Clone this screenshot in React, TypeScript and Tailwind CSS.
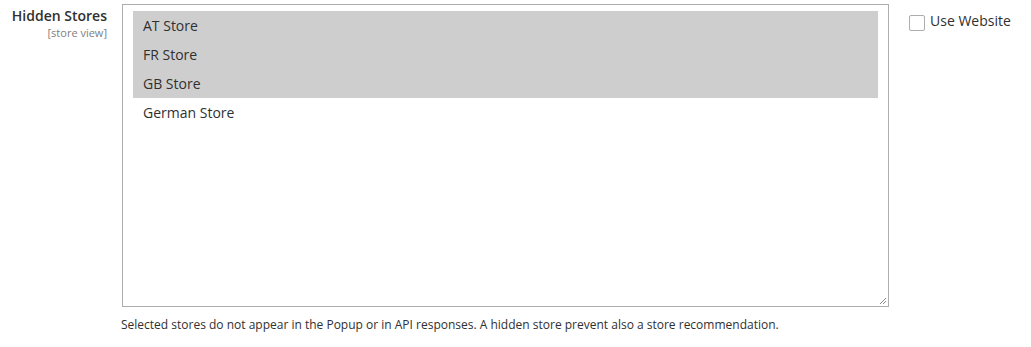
import React from 'react'

const stores = [
  { name: 'AT Store', selected: true },
  { name: 'FR Store', selected: true },
  { name: 'GB Store', selected: true },
  { name: 'German Store', selected: false },
]

export default function App() {
  return (
    <div className="w-[1031px] h-[347px] bg-white text-[#303030] font-['Open_Sans',sans-serif]">
      <div className="flex pt-[4px]">
        <div className="w-[107px] shrink-0 text-right pt-[2px]">
          <div className="text-[14px] leading-[19px] font-semibold">Hidden Stores</div>
          <div className="text-[11px] leading-[14px] text-[#808080] mt-[1px]">[store view]</div>
        </div>

        <div className="ml-[15px] w-[767px] shrink-0">
          <div className="relative h-[303px] border border-[#adadad] bg-white px-[10px] py-[6px]">
            {stores.map((s) => (
              <div
                key={s.name}
                className={`h-[29px] flex items-center pl-[10px] text-[14px] ${s.selected ? 'bg-[#cecece]' : ''}`}
              >
                {s.name}
              </div>
            ))}
            <svg className="absolute right-[1px] bottom-[1px]" width="9" height="9" viewBox="0 0 9 9">
              <path d="M8 2 L2 8 M8 5 L5 8" stroke="#8a8a8a" strokeWidth="1" />
            </svg>
          </div>
          <p className="text-[12px] leading-[16px] mt-[10px] -ml-[1px]">
            Selected stores do not appear in the Popup or in API responses. A hidden store prevent also a store recommendation.
          </p>
        </div>

        <label className="ml-[20px] flex items-start gap-[5px] pt-[11px]">
          <span className="w-[16px] h-[16px] border border-[#adadad] rounded-[2px] bg-white" />
          <span className="text-[14px] leading-[19px] -mt-[4px]">Use Website</span>
        </label>
      </div>
    </div>
  )
}
